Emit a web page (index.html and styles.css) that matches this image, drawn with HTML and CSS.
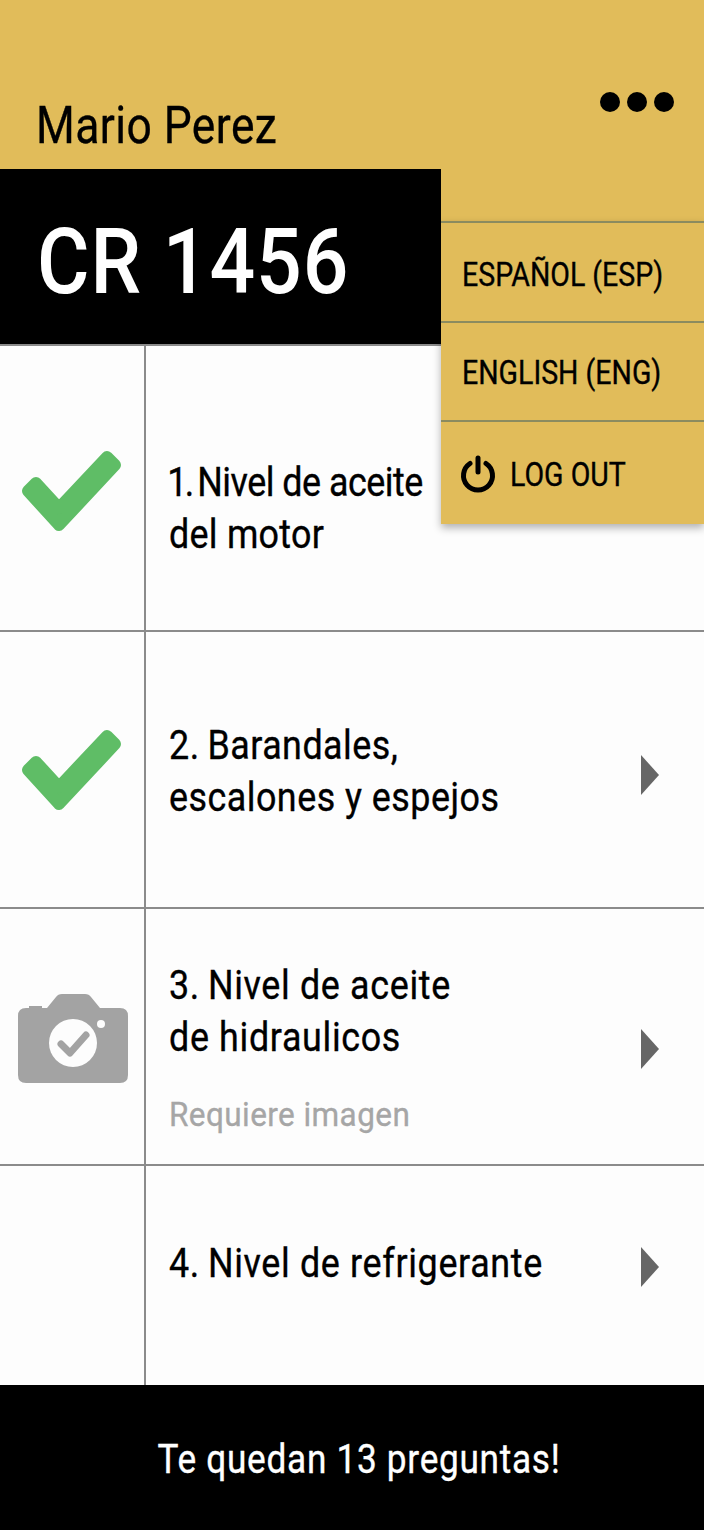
FILE: index.html
```html
<!DOCTYPE html>
<html lang="es">
<head>
<meta charset="utf-8">
<title>Checklist</title>
<link rel="stylesheet" href="styles.css">
</head>
<body>
<div class="app">
  <header class="top">
    <h1 class="driver">Mario Perez</h1>
    <div class="dots"><i></i><i></i><i></i></div>
  </header>
  <div class="band"><div class="plate"><span class="plate-text">CR 1456</span></div></div>
  <main class="list">
    <section class="row row-1">
      <div class="status status-1">
        <svg class="check" viewBox="0 0 96 80"><polygon points="36,58 84,7 92,15 36,75 5,41 13,33"/></svg>
      </div>
      <div class="body"><p class="q"><span class="num-one">1.</span>&#8201;<span class="tight">Nivel de aceite</span><br>del motor</p></div>
    </section>
    <section class="row row-2">
      <div class="status status-2">
        <svg class="check" viewBox="0 0 96 80"><polygon points="36,58 84,7 92,15 36,75 5,41 13,33"/></svg>
      </div>
      <div class="body"><p class="q">2.&#8201;Barandales,<br>escalones y espejos</p>
        <svg class="arrow" viewBox="0 0 18 40"><polygon points="0,0 18,20 0,40"/></svg></div>
    </section>
    <section class="row row-3">
      <div class="status status-3">
        <svg class="camera" viewBox="0 0 110 89">
          <path class="cam-body" d="M24 14 L29 14 L38 3 Q40 0 44 0 L67 0 Q71 0 73 3 L82 14 L102 14 Q110 14 110 22 L110 81 Q110 89 102 89 L8 89 Q0 89 0 81 L0 22 Q0 14 8 14 L11 14 L11 12 L24 12 Z"/>
          <circle class="cam-hole" cx="55" cy="49" r="24"/>
          <circle class="cam-hole" cx="83" cy="30" r="4"/>
          <polyline class="cam-tick" points="43,50 52,59 68,41"/>
        </svg>
      </div>
      <div class="body"><p class="q">3.&#8201;Nivel de aceite<br>de hidraulicos</p><p class="note">Requiere imagen</p>
        <svg class="arrow" viewBox="0 0 18 40"><polygon points="0,0 18,20 0,40"/></svg></div>
    </section>
    <section class="row row-4">
      <div class="status"></div>
      <div class="body"><p class="q">4.&#8201;Nivel de refrigerante</p>
        <svg class="arrow" viewBox="0 0 18 40"><polygon points="0,0 18,20 0,40"/></svg></div>
    </section>
  </main>
  <footer class="foot"><span class="foot-text">Te quedan 13 preguntas!</span></footer>
  <nav class="menu">
    <a class="item"><span class="item-text">ESPAÑOL (ESP)</span></a>
    <a class="item"><span class="item-text">ENGLISH (ENG)</span></a>
    <a class="item item-out">
      <svg class="power" viewBox="0 0 36 38"><path d="M10 8.500 A14.500 14.500 0 1 0 26 8.500"/><line x1="18" y1="3" x2="18" y2="17"/></svg>
      <span class="item-text">LOG OUT</span>
    </a>
  </nav>
</div>
</body>
</html>
```
FILE: styles.css
```css
* { box-sizing: border-box; }
html, body { margin: 0; padding: 0; }
body { font-family: Roboto, "Liberation Sans", sans-serif; color: #000; background: #fdfdfd; -webkit-text-stroke: 0.35px currentColor; }
.app { position: relative; width: 704px; height: 1530px; overflow: hidden; display: flex; flex-direction: column; }

.top { height: 169px; background: #e1bc5a; display: flex; justify-content: space-between; padding: 96px 30px 0 36px; flex: none; }
.driver { margin: 0; font-size: 52px; line-height: 60px; font-weight: 400; letter-spacing: 0.5px; transform: scaleX(.854); transform-origin: left center; white-space: nowrap; }
.dots { display: flex; gap: 7px; margin-top: -4px; }
.dots i { width: 20px; height: 20px; border-radius: 50%; background: #000; display: block; }

.band { background: #e1bc5a; flex: none; }
.plate { width: 441px; height: 175px; background: #000; color: #fff; font-size: 90px; line-height: 188px; padding-left: 37px; letter-spacing: 1px; font-weight: 500; -webkit-text-stroke: 0; }
.plate-text { display: inline-block; transform: scaleX(.894); transform-origin: left center; white-space: nowrap; }

.list { flex: 1; display: flex; flex-direction: column; border-top: 2px solid #8b8b8b; }
.row { display: flex; border-bottom: 2px solid #8b8b8b; }
.row-1 { height: 286px; }
.row-2 { height: 277px; }
.row-3 { height: 257px; }
.row-4 { flex: 1; border-bottom: 0; }
.status { width: 146px; flex: none; border-right: 2px solid #8b8b8b; padding-left: 23px; }
.status-1 { padding-top: 104px; }
.status-2 { padding-top: 97px; }
.status-3 { padding: 85px 0 0 18px; }
.check { display: block; width: 96px; height: 80px; overflow: visible; }
.check polygon { fill: #5fbd66; stroke: #5fbd66; stroke-width: 12; stroke-linejoin: round; }
.camera { display: block; width: 110px; height: 89px; }
.cam-body { fill: #a3a3a3; }
.cam-hole { fill: #fdfdfd; }
.cam-tick { fill: none; stroke: #a3a3a3; stroke-width: 7; stroke-linecap: round; stroke-linejoin: round; }

.body { position: relative; flex: 1; padding-left: 23px; }
.row-1 .body { padding-top: 111px; }
.row-2 .body { padding-top: 88px; }
.row-3 .body { padding-top: 51px; }
.row-4 .body { padding-top: 72px; }
.q { margin: 0; font-size: 40px; line-height: 52px; letter-spacing: 0.75px; transform: scaleX(.896); transform-origin: left center; white-space: nowrap; }
.row-1 .q { letter-spacing: 0.3px; }
.row-2 .q { letter-spacing: 0.55px; }
.num-one { margin: 0 -2px 0 -2px; letter-spacing: -3px; }
.tight { letter-spacing: -0.55px; }
.note { margin: 30px 0 0; font-size: 34px; line-height: 40px; color: #a6a6a6; letter-spacing: 0.45px; transform: scaleX(.927); transform-origin: left center; white-space: nowrap; }
.arrow { position: absolute; right: 45px; width: 18px; height: 40px; }
.arrow polygon { fill: #666; }
.row-2 .arrow { top: 123px; }
.row-3 .arrow { top: 120px; }
.row-4 .arrow { top: 81px; }

.foot { height: 145px; flex: none; background: #000; color: #fff; font-size: 40px; line-height: 150px; text-align: center; letter-spacing: 0.8px; padding-left: 14px; }
.foot-text { display: inline-block; transform: scaleX(.88); white-space: nowrap; }

.menu { position: absolute; left: 441px; top: 221px; width: 263px; height: 303px; background: #e1bc5a; box-shadow: 0 4px 8px rgba(0,0,0,.3); display: flex; flex-direction: column; }
.item { display: flex; align-items: center; height: 100px; border-top: 2px solid #8b8b5f; padding: 4px 0 0 21px; font-size: 33px; color: #000; gap: 14px; }
.item + .item { height: 99px; padding-top: 2px; }
.item-out { flex: 1; padding-left: 19px; }
.item-text { transform: scaleX(.865); transform-origin: left center; white-space: nowrap; }
.power { width: 36px; height: 38px; fill: none; stroke: #000; stroke-width: 5; stroke-linecap: round; }
```
